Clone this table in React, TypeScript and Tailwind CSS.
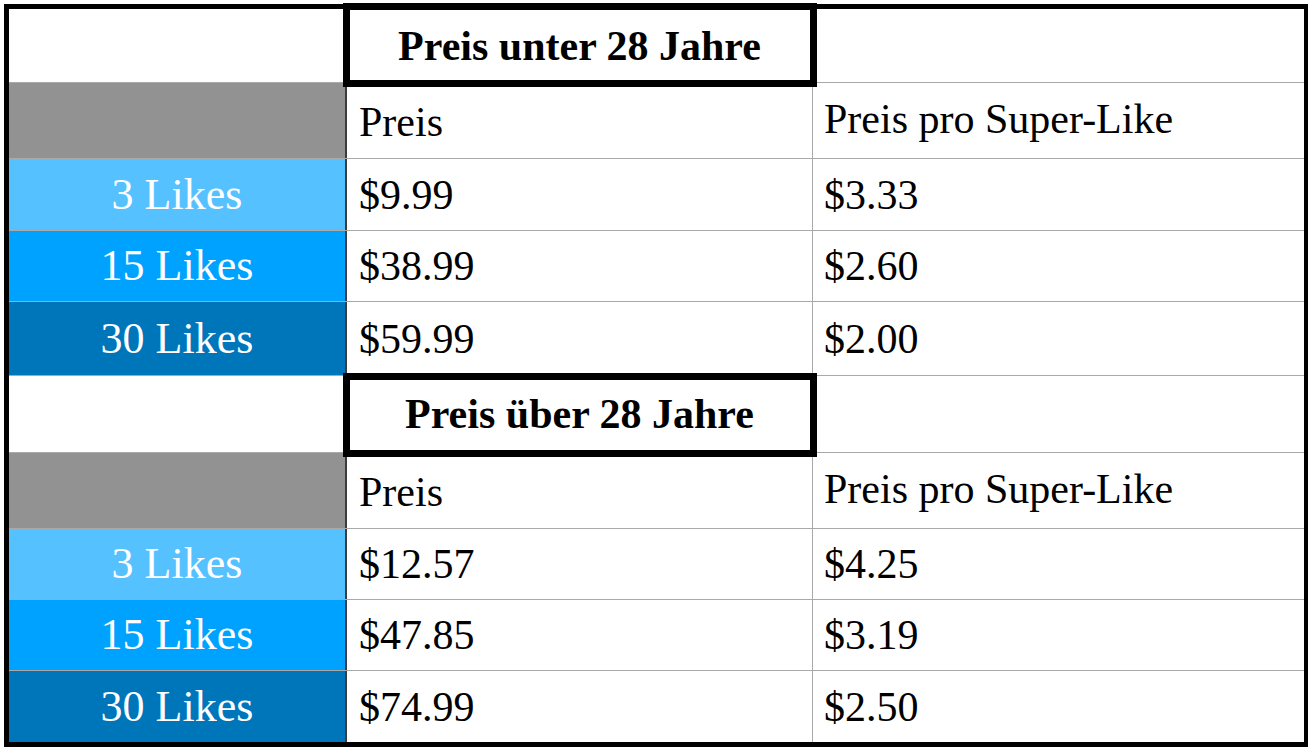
import React from "react";

type DataRow = { label: string; price: string; perLike: string; color: string };

const under: DataRow[] = [
  { label: "3 Likes", price: "$9.99", perLike: "$3.33", color: "bg-[#56c1ff]" },
  { label: "15 Likes", price: "$38.99", perLike: "$2.60", color: "bg-[#00a2ff]" },
  { label: "30 Likes", price: "$59.99", perLike: "$2.00", color: "bg-[#0076ba]" },
];

const over: DataRow[] = [
  { label: "3 Likes", price: "$12.57", perLike: "$4.25", color: "bg-[#56c1ff]" },
  { label: "15 Likes", price: "$47.85", perLike: "$3.19", color: "bg-[#00a2ff]" },
  { label: "30 Likes", price: "$74.99", perLike: "$2.50", color: "bg-[#0076ba]" },
];

const row = "grid grid-cols-[336px_467px_492px]";

function TitleRow({ title, first, height, boxTop }: { title: string; first?: boolean; height: string; boxTop: string }) {
  return (
    <div className={`${row} ${height} ${first ? "" : "border-t border-[#a9a9a9]"}`}>
      <div className="bg-white" />
      <div className="relative flex items-center justify-center border-l-2 border-[#3c3c3c] bg-white">
        <div className={`absolute ${boxTop} -bottom-[5px] -left-[4px] -right-[5px] z-10 border-[7px] border-black`} />
        <span className="relative z-20 text-[42px] leading-[42px] font-bold text-black">{title}</span>
      </div>
      <div className="border-l border-[#a9a9a9] bg-white" />
    </div>
  );
}

function HeaderRow() {
  return (
    <div className={`${row} h-[76px] border-t border-[#a9a9a9]`}>
      <div className="bg-[#929292]" />
      <div className="flex items-center border-l-2 border-[#3c3c3c] pl-[12px] pt-[2px] text-[42px] leading-[42px] text-black">
        Preis
      </div>
      <div className="flex items-center border-l border-[#a9a9a9] pl-[11px] pb-[4px] text-[42px] leading-[42px] text-black">
        Preis pro Super-Like
      </div>
    </div>
  );
}

function Row({ r, height }: { r: DataRow; height: string }) {
  return (
    <div className={`${row} ${height} border-t border-[#a9a9a9]`}>
      <div className={`flex items-center justify-center ${r.color} text-[44px] leading-[44px] text-white`}>
        {r.label}
      </div>
      <div className="flex items-center border-l-2 border-[#3c3c3c] pl-[12px] text-[42px] leading-[42px] text-black">
        {r.price}
      </div>
      <div className="flex items-center border-l border-[#a9a9a9] pl-[11px] text-[42px] leading-[42px] text-black">
        {r.perLike}
      </div>
    </div>
  );
}

export default function App() {
  return (
    <div className="h-screen w-screen overflow-hidden bg-white pl-[4px] pt-[4px] font-['Liberation_Serif','Times_New_Roman',serif]">
      <div className="w-[1305px] border-[5px] border-black">
        <TitleRow title="Preis unter 28 Jahre" first height="h-[73px]" boxTop="-top-[6px]" />
        <HeaderRow />
        <Row r={under[0]} height="h-[72px]" />
        <Row r={under[1]} height="h-[71px]" />
        <Row r={under[2]} height="h-[74px]" />
        <TitleRow title="Preis über 28 Jahre" height="h-[77px]" boxTop="-top-[3px]" />
        <HeaderRow />
        <Row r={over[0]} height="h-[71px]" />
        <Row r={over[1]} height="h-[71px]" />
        <Row r={over[2]} height="h-[72px]" />
      </div>
    </div>
  );
}
